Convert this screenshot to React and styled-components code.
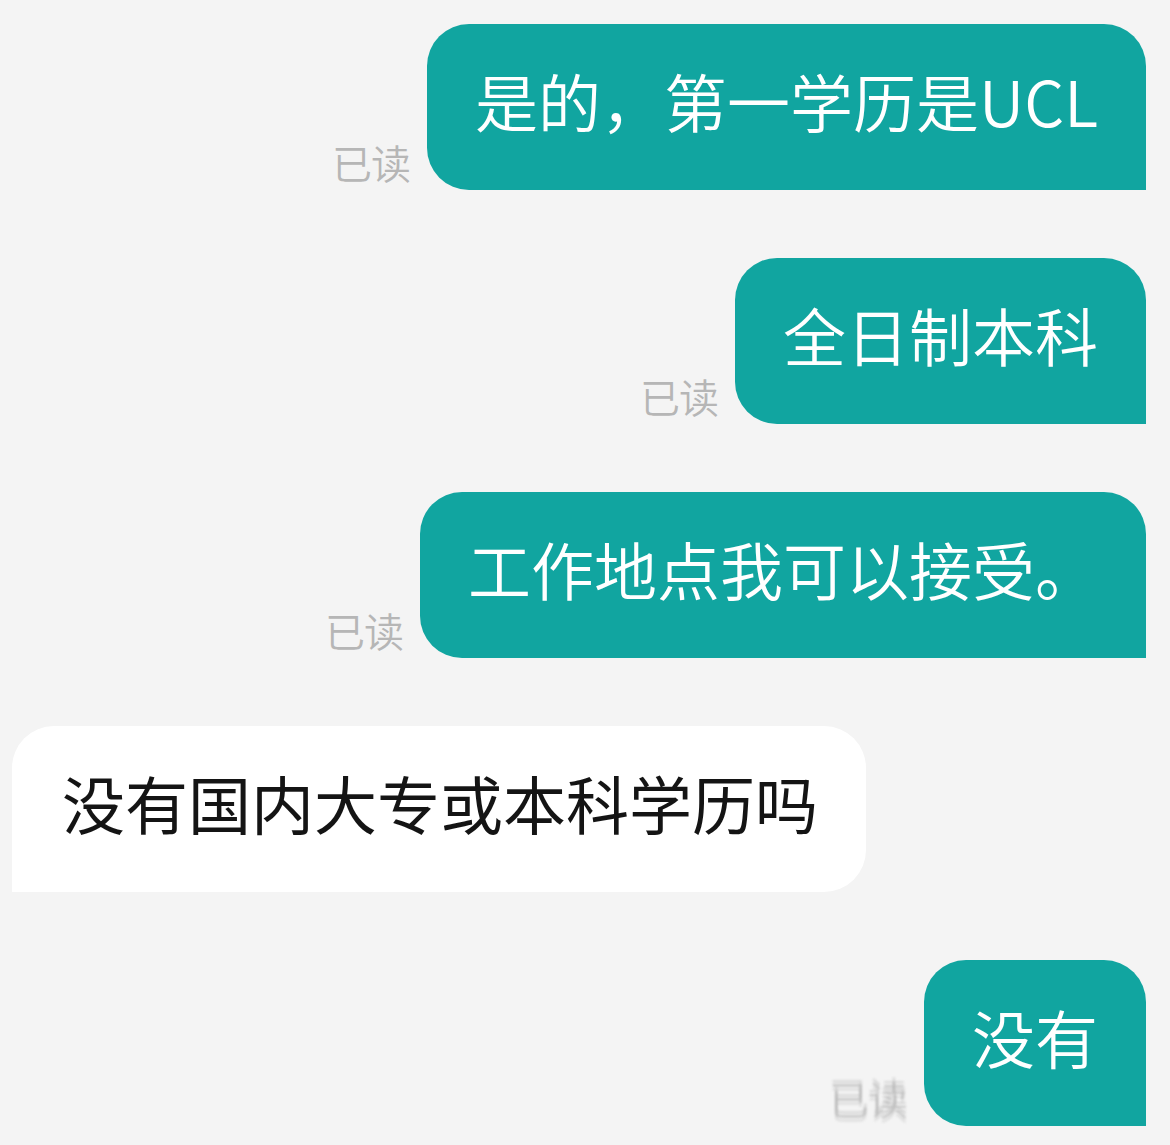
import React from "react";
import styled, { createGlobalStyle, css } from "styled-components";

const Global = createGlobalStyle`
  html, body {
    margin: 0;
    padding: 0;
    background: #f4f4f4;
  }
  body {
    font-family: "Noto Sans CJK SC", "Noto Sans", sans-serif;
  }
`;

const Thread = styled.div`
  display: flex;
  flex-direction: column;
  gap: 68px;
  padding: 24px 24px 17px 12px;
  background: #f4f4f4;
  min-height: 1145px;
  box-sizing: border-box;
`;

const Row = styled.div`
  display: flex;
  align-items: flex-end;
  justify-content: ${(p) => (p.$mine ? "flex-end" : "flex-start")};
  gap: 17px;
`;

const ReadMark = styled.span`
  font-size: 40px;
  line-height: 40px;
  font-weight: 350;
  color: #b6b6b6;
  margin-bottom: 8px;
  letter-spacing: -1px;
  ${(p) =>
    p.$ghost &&
    css`
      color: rgba(170, 170, 170, 0.55);
      filter: blur(0.8px);
      text-shadow: 0 -4px 0 rgba(190, 190, 190, 0.45), 0 4px 0 rgba(190, 190, 190, 0.35);
    `}
`;

const Bubble = styled.div`
  box-sizing: border-box;
  height: 166px;
  padding: 36px 48px 0 48px;
  font-size: 63px;
  line-height: 80px;
  white-space: nowrap;
  ${(p) =>
    p.$mine
      ? css`
          background: #11a5a0;
          color: #ffffff;
          font-weight: 350;
          border-radius: 42px 42px 0 42px;
        `
      : css`
          background: #ffffff;
          color: #141414;
          font-weight: 400;
          border-radius: 42px 42px 42px 0;
          padding-left: 50px;
          padding-right: 48px;
        `}
`;

const messages = [
  { mine: true, text: "是的，第一学历是UCL", mark: "已读" },
  { mine: true, text: "全日制本科", mark: "已读" },
  { mine: true, text: "工作地点我可以接受。", mark: "已读" },
  { mine: false, text: "没有国内大专或本科学历吗" },
  { mine: true, text: "没有", mark: "已读", ghost: true },
];

export default function App() {
  return (
    <>
      <Global />
      <Thread>
        {messages.map((m, i) => (
          <Row key={i} $mine={m.mine}>
            {m.mark && <ReadMark $ghost={m.ghost}>{m.mark}</ReadMark>}
            <Bubble $mine={m.mine}>{m.text}</Bubble>
          </Row>
        ))}
      </Thread>
    </>
  );
}
